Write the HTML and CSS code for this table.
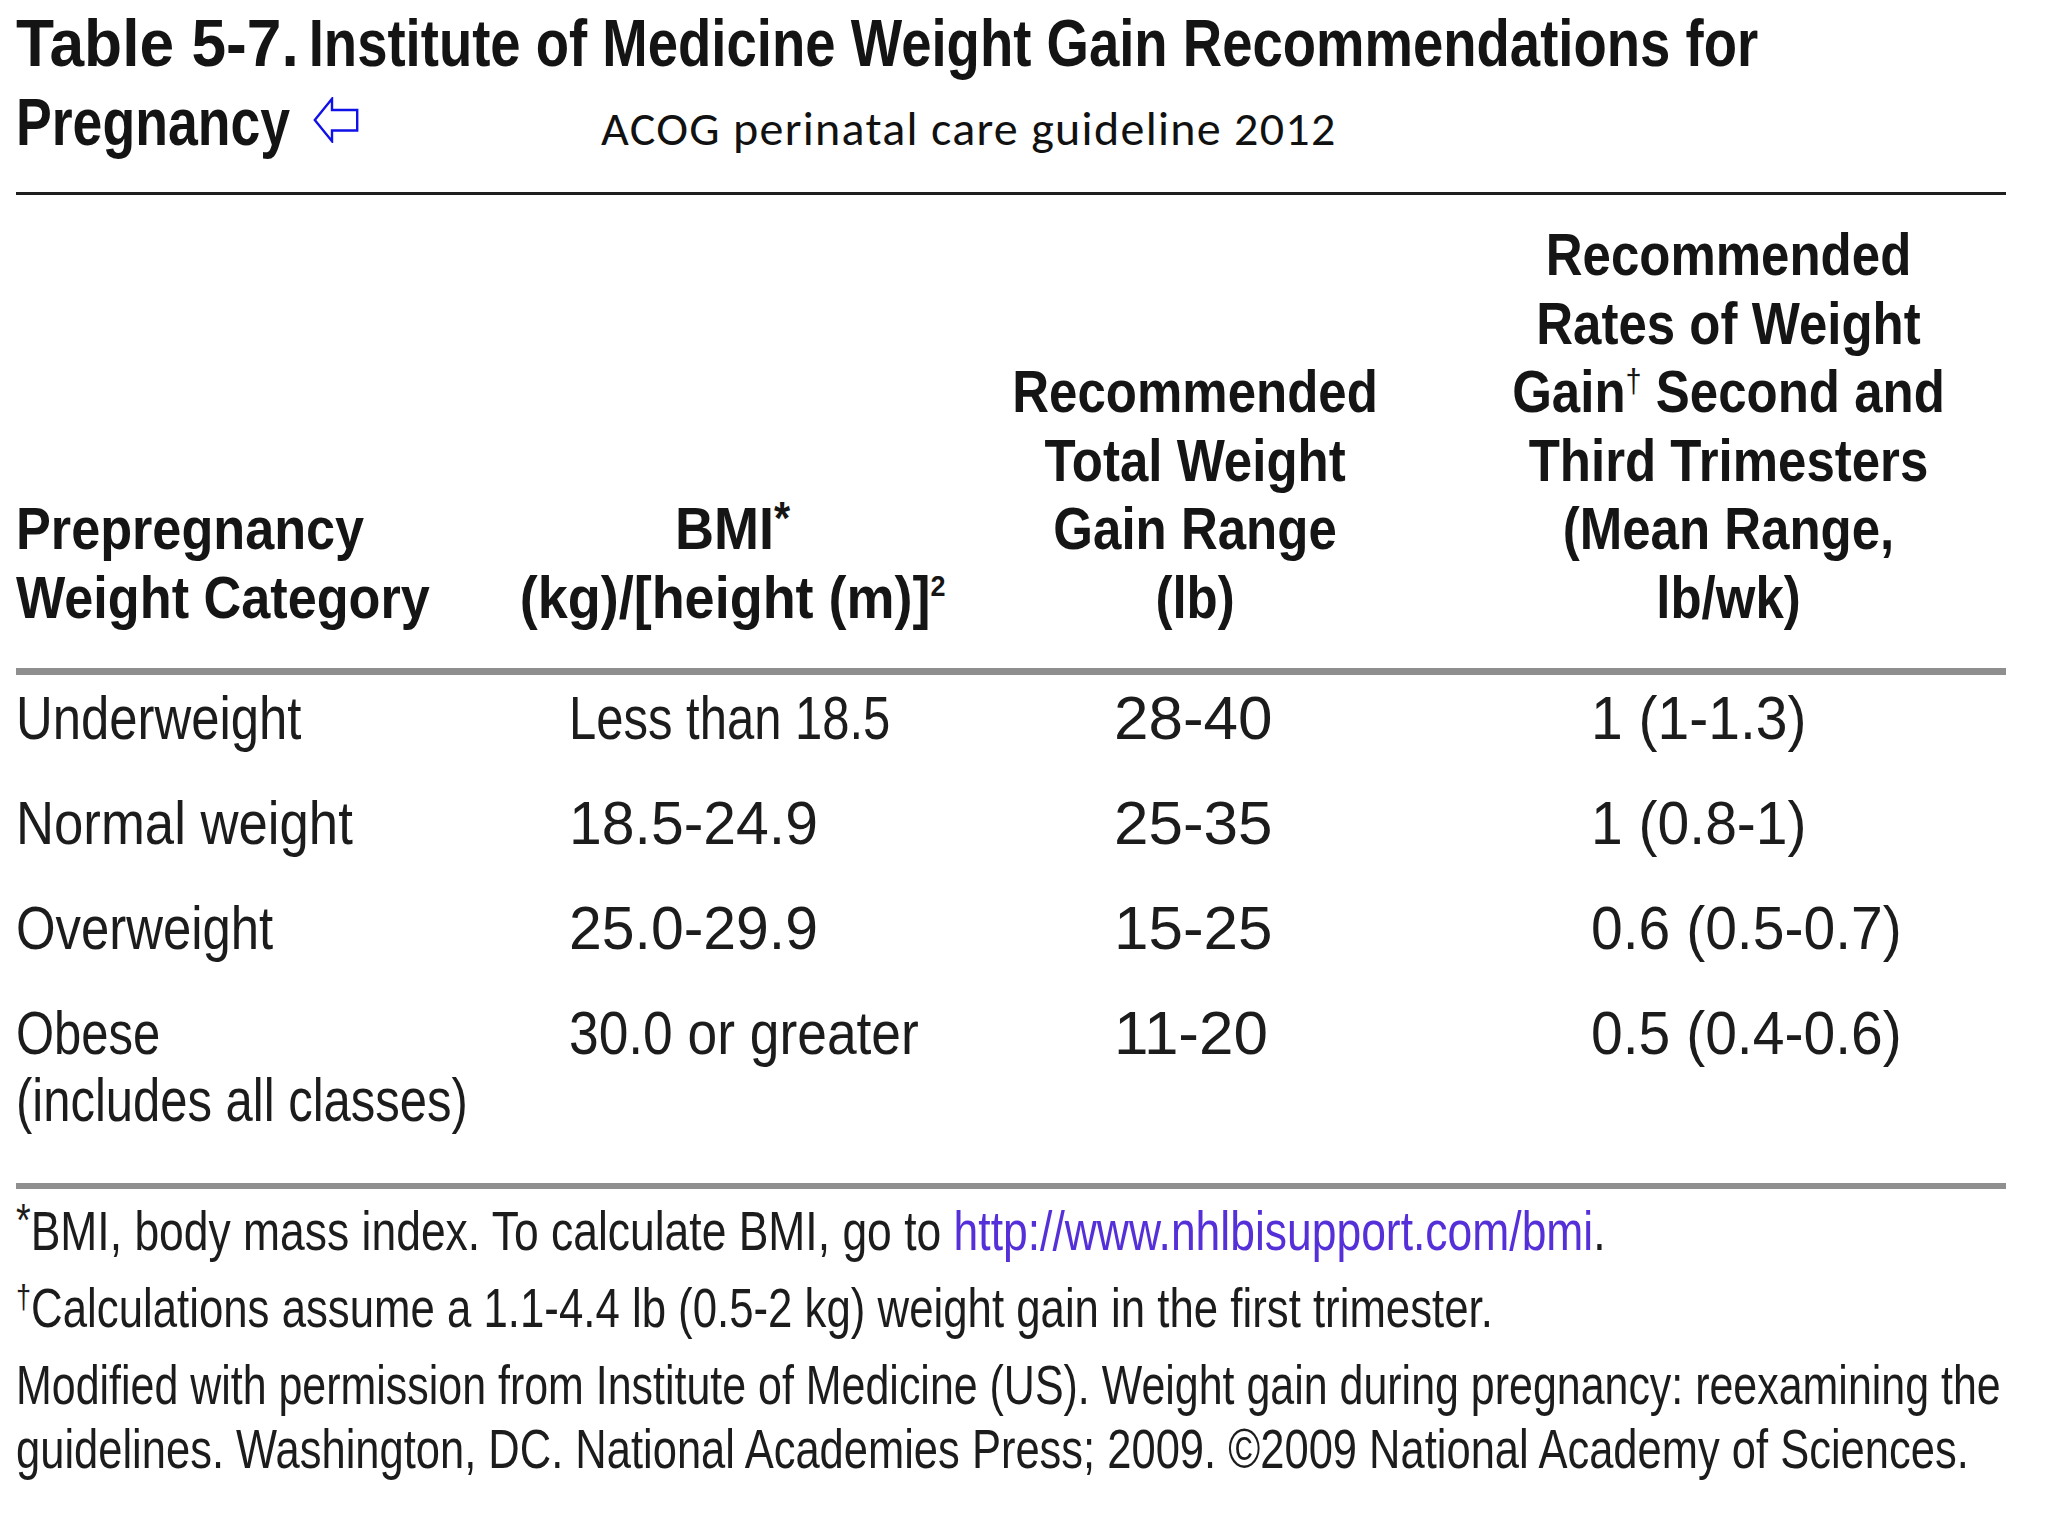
FILE: index.html
```html
<!DOCTYPE html>
<html lang="en">
<head>
<meta charset="utf-8">
<title>Table 5-7. Institute of Medicine Weight Gain Recommendations for Pregnancy</title>
<link rel="stylesheet" href="styles.css">
</head>
<body>
<div class="page">
  <header class="title">
    <div class="title-line"><span class="tx t-num">Table 5-7.</span> <span class="vx t-rest">Institute of Medicine Weight Gain Recommendations for</span></div>
    <div class="title-line second">
      <div class="t-preg"><span class="tx t-rest2">Pregnancy</span></div>
      <div class="t-arrow">
        <svg class="back-arrow" viewBox="0 0 46 46" width="46" height="46" aria-hidden="true">
          <path d="M1.8 23 L19 1.8 L19 13 L44.2 13 L44.2 33.5 L19 33.5 L19 44.2 Z" fill="#fff" stroke="#1010e8" stroke-width="2.4" stroke-linejoin="miter"/>
        </svg>
      </div>
      <div class="source">ACOG perinatal care guideline 2012</div>
    </div>
  </header>

  <div class="wg-table">
    <div class="head-row">
      <div class="hc c1"><span class="tx s87">Prepregnancy<br>Weight Category</span></div>
      <div class="hc c2"><span class="tx s90">BMI<sup class="ast">*</sup><br>(kg)/[height (m)]<sup class="sq">2</sup></span></div>
      <div class="hc c3"><span class="tx s85">Recommended<br>Total Weight<br>Gain Range<br>(lb)</span></div>
      <div class="hc c4"><span class="tx s85">Recommended<br>Rates of Weight<br>Gain<sup class="dg">†</sup> Second and<br>Third Trimesters<br>(Mean Range,<br>lb/wk)</span></div>
    </div>

    <div class="body-row">
      <div class="dc c1"><span class="tx s82">Underweight</span></div>
      <div class="dc c2"><span class="tx s79">Less than 18.5</span></div>
      <div class="dc c3"><span class="tx s100">28-40</span></div>
      <div class="dc c4"><span class="tx s92">1 (1-1.3)</span></div>
    </div>
    <div class="body-row">
      <div class="dc c1"><span class="tx s85">Normal weight</span></div>
      <div class="dc c2"><span class="tx s95">18.5-24.9</span></div>
      <div class="dc c3"><span class="tx s100">25-35</span></div>
      <div class="dc c4"><span class="tx s92">1 (0.8-1)</span></div>
    </div>
    <div class="body-row">
      <div class="dc c1"><span class="tx s82">Overweight</span></div>
      <div class="dc c2"><span class="tx s95">25.0-29.9</span></div>
      <div class="dc c3"><span class="tx s100">15-25</span></div>
      <div class="dc c4"><span class="tx s92">0.6 (0.5-0.7)</span></div>
    </div>
    <div class="body-row last">
      <div class="dc c1"><span class="tx s79">Obese<br>(includes all classes)</span></div>
      <div class="dc c2"><span class="tx s86">30.0 or greater</span></div>
      <div class="dc c3"><span class="tx s100">11-20</span></div>
      <div class="dc c4"><span class="tx s92">0.5 (0.4-0.6)</span></div>
    </div>
  </div>

  <footer class="notes">
    <p><span class="vx f1"><sup class="ast">*</sup>BMI, body mass index. To calculate BMI, go to <span class="link">http://www.nhlbisupport.com/bmi</span>.</span></p>
    <p><span class="vx f2"><sup>†</sup>Calculations assume a 1.1-4.4 lb (0.5-2 kg) weight gain in the first trimester.</span></p>
    <p><span class="vx f3">Modified with permission from Institute of Medicine (US). Weight gain during pregnancy: reexamining the</span><br><span class="vx f4">guidelines. Washington, DC. National Academies Press; 2009. ©2009 National Academy of Sciences.</span></p>
  </footer>
</div>
</body>
</html>
```

FILE: styles.css
```css
html, body {
  margin: 0;
  padding: 0;
  background: #ffffff;
  overflow: hidden;
}

body {
  font-family: "Liberation Sans", Arial, sans-serif;
  color: #161616;
}

.page {
  width: 1990px;
  padding: 3px 0 0 16px;
}

/* horizontally condensed text (Futura-like narrow face) */
.tx {
  display: inline-block;
  white-space: nowrap;
  transform: scaleX(var(--sx, 1));
  transform-origin: 0 50%;
}

/* long single lines: smaller face stretched upward from the baseline,
   so that the layout box is as wide as the drawn text */
.vx {
  display: inline-block;
  white-space: nowrap;
  line-height: 1;
  transform: scale(var(--sx, 1), var(--sy, 1));
  transform-origin: 0 var(--oy, 0);
}

.s79 { --sx: 0.79; }
.s82 { --sx: 0.82; }
.s85 { --sx: 0.85; }
.s86 { --sx: 0.86; }
.s87 { --sx: 0.87; }
.s90 { --sx: 0.90; }
.s92 { --sx: 0.92; }
.s95 { --sx: 0.95; }
.s100 { --sx: 1; }

/* ---------- title ---------- */
.title {
  font-weight: 700;
  font-size: 67px;
  line-height: 79px;
  color: #141414;
  border-bottom: 3px solid #1e1e1e;
  padding-bottom: 31px;
}

.title-line {
  white-space: nowrap;
  height: 79px;
}

.t-num {
  --sx: 0.93;
  margin-right: -30px;
}

.t-rest {
  font-size: 54.5px;
  --sx: 1;
  --sy: 1.229;
  --oy: 46px;
}

.t-rest2 { --sx: 0.80; }

.title-line.second {
  display: grid;
  grid-template-columns: 297px 288px auto;
  align-items: baseline;
}

.t-arrow {
  align-self: center;
  margin-top: -3px;
}

.back-arrow {
  display: block;
}

.source {
  font-family: "Carlito", "Lato", "Open Sans", sans-serif;
  font-weight: 400;
  font-size: 48px;
  line-height: 60px;
  letter-spacing: 1.3px;
  color: #111;
}

/* ---------- table ---------- */
.wg-table {
  margin-top: 26px;
}

.head-row,
.body-row {
  display: grid;
  grid-template-columns: 484px 466px 458px 582px;
}

.head-row {
  align-items: end;
  font-weight: 700;
  font-size: 60px;
  line-height: 68.6px;
  color: #151515;
  padding-bottom: 35px;
  border-bottom: 7px solid #8f8f8f;
}

.hc {
  display: flex;
  flex-direction: column;
}

.hc.c1 { align-items: flex-start; }
.hc.c2, .hc.c3 { align-items: center; }
.hc.c4 { align-items: center; padding-left: 26px; }

.hc.c2 .tx,
.hc.c3 .tx,
.hc.c4 .tx {
  text-align: center;
  transform-origin: 50% 50%;
}

.hc sup {
  font-size: 36px;
  line-height: 0;
  vertical-align: 0.5em;
}

.hc sup.ast { font-size: 46px; vertical-align: 0.32em; }
.hc sup.sq { font-size: 30px; vertical-align: 0.75em; }
.hc sup.dg { font-size: 34px; vertical-align: 0.6em; font-weight: 400; }

.body-row {
  font-size: 62px;
  line-height: 67px;
  padding-bottom: 38px;
  color: #1c1c1c;
}

.head-row + .body-row {
  padding-top: 9px;
}

.body-row.last {
  padding-bottom: 50px;
  border-bottom: 6px solid #8f8f8f;
}

.dc.c2 { padding-left: 69px; }
.dc.c3 { padding-left: 148px; }
.dc.c4 { padding-left: 167px; }

/* ---------- notes ---------- */
.notes {
  padding-top: 10px;
  font-size: 55px;
  line-height: 64px;
  color: #1c1c1c;
}

.notes p {
  margin: 0 0 13px 0;
}

.notes .vx {
  font-size: 43.5px;
  --sy: 1.2644;
  --oy: 36.8px;
}

.f1 { --sx: 1.0215; }
.f2 { --sx: 1.006; }
.f3 { --sx: 0.987; }
.f4 { --sx: 1.0; }

.notes sup {
  font-size: 0.62em;
  line-height: 0;
  vertical-align: 0.55em;
}

.notes sup.ast {
  font-size: 0.85em;
  vertical-align: 0.3em;
}

.link {
  color: #5530d8;
}
```
